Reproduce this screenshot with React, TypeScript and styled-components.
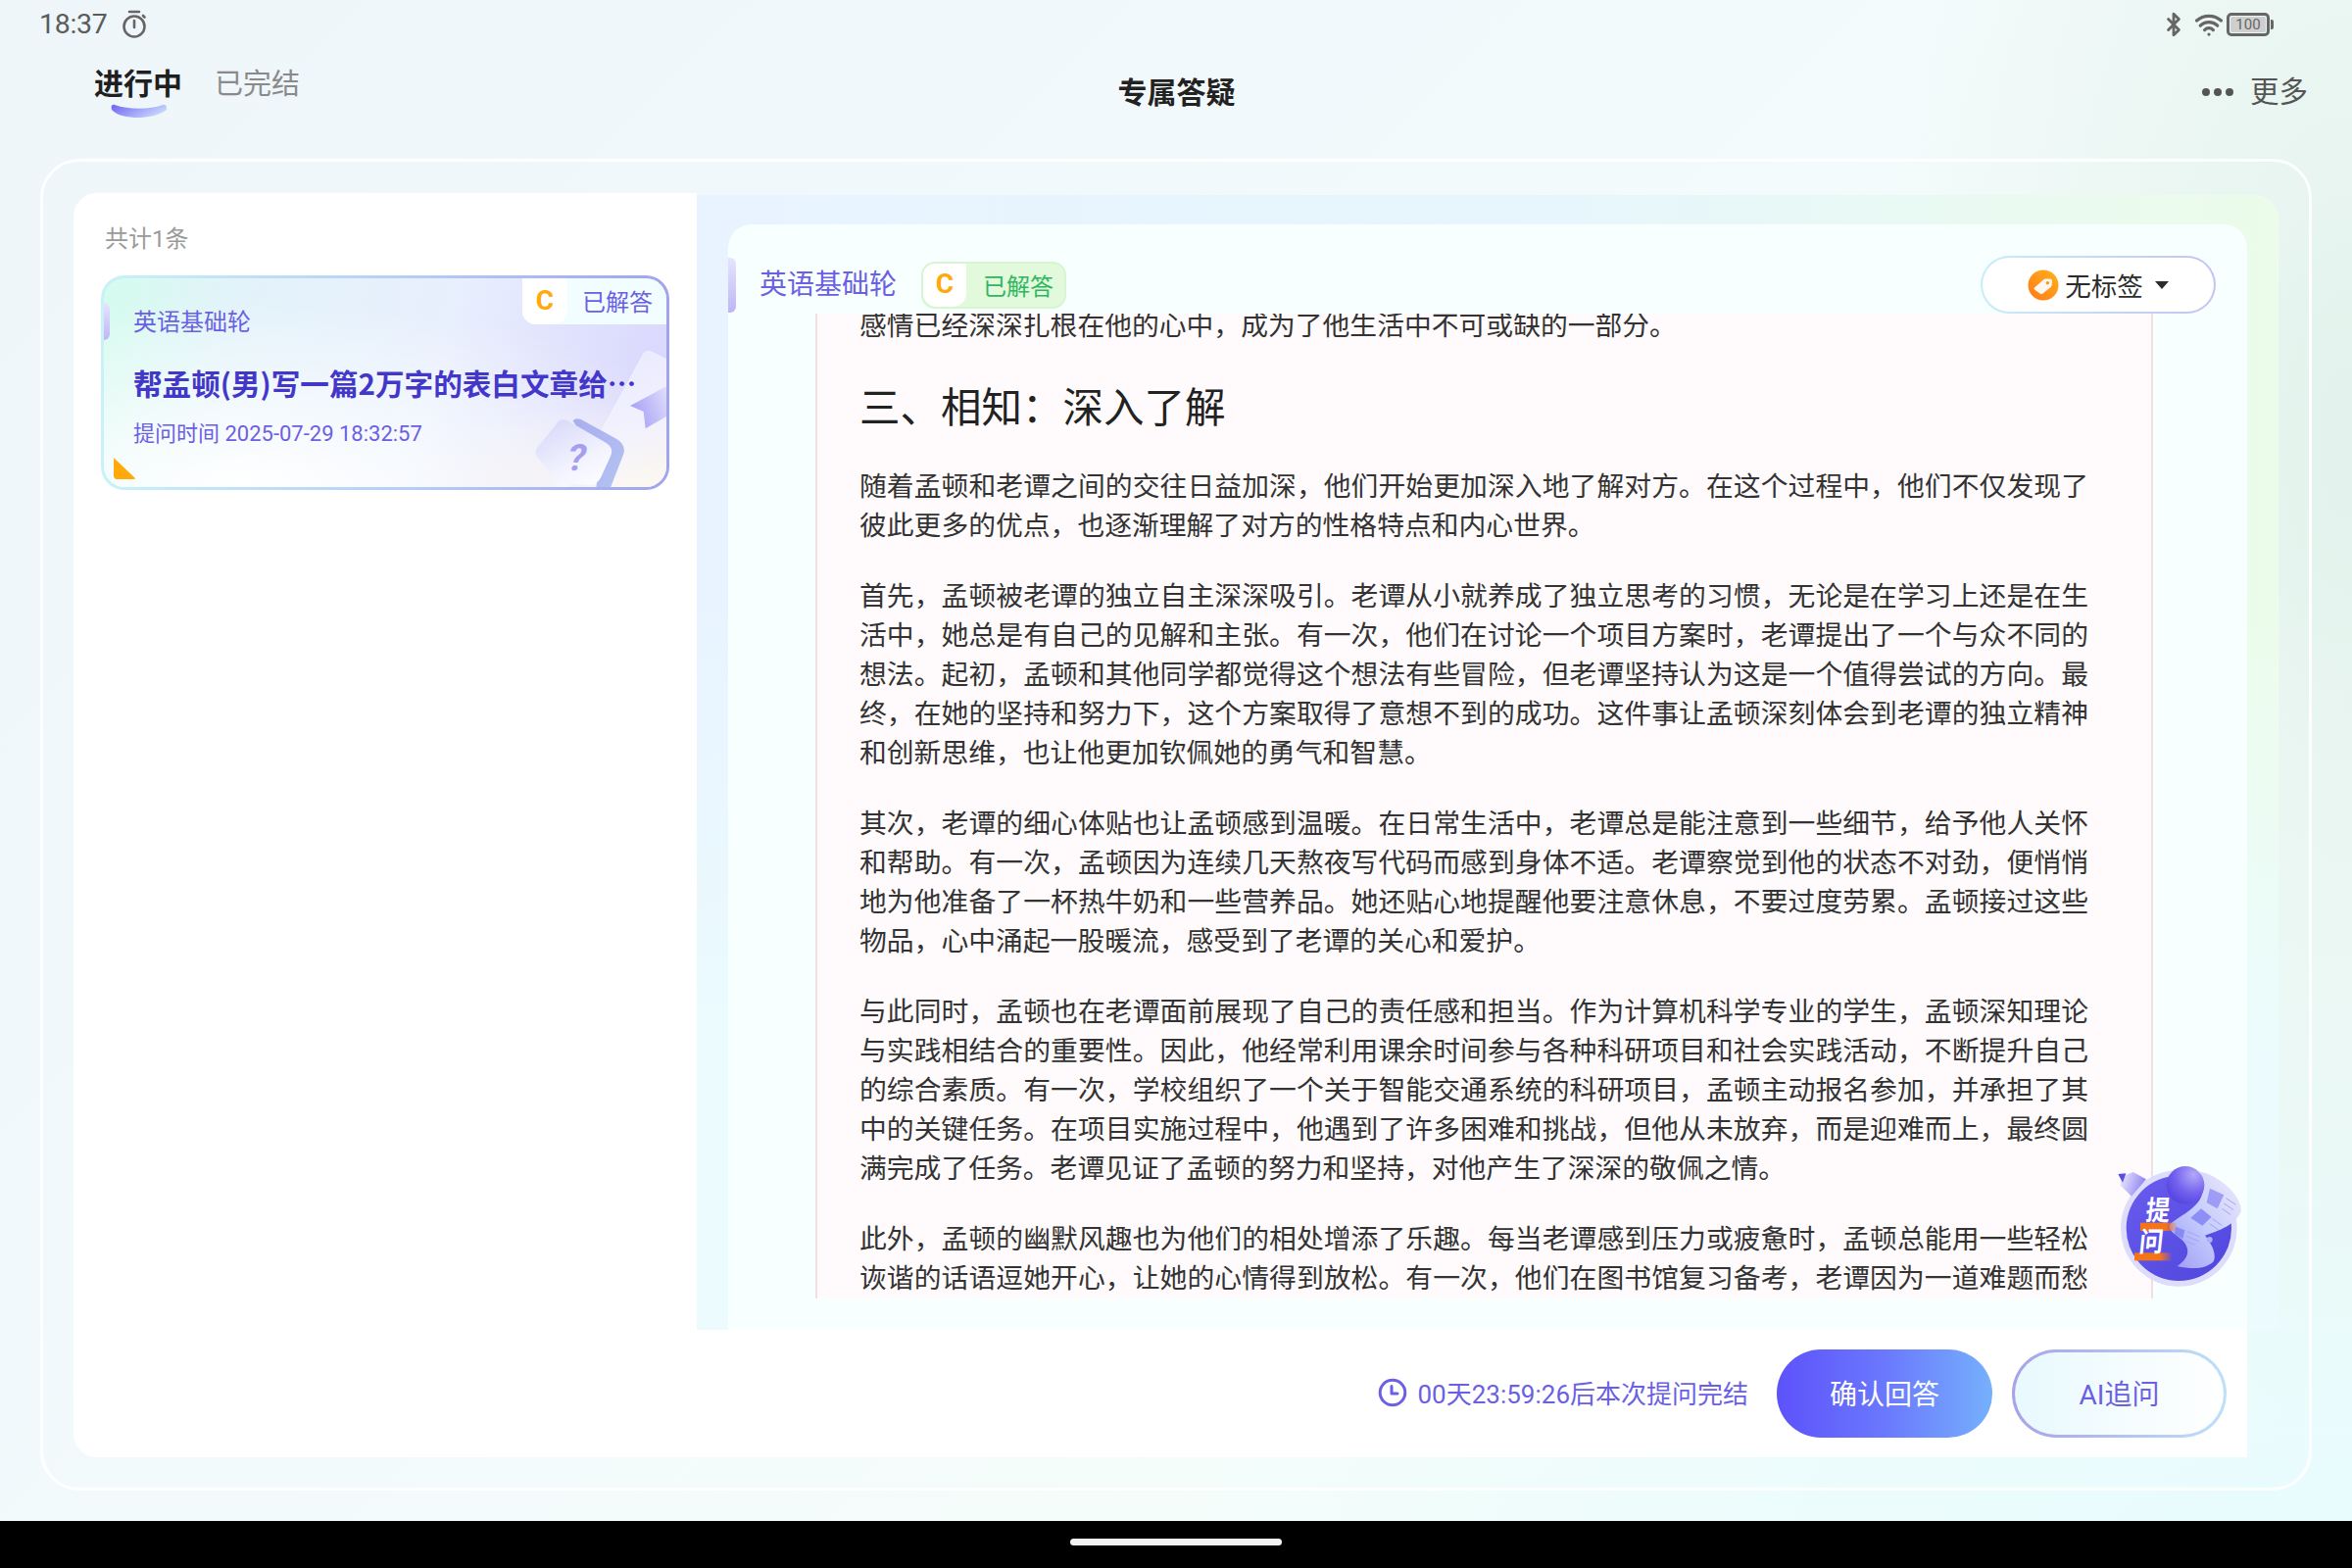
import React from "react";
import styled, { createGlobalStyle } from "styled-components";
import { Bluetooth, Wifi } from "lucide-react";

const FONT = `Roboto, "Noto Sans CJK SC", sans-serif`;

const GlobalStyle = createGlobalStyle`
  html, body {
    margin: 0;
    padding: 0;
    background: #000;
  }
  body {
    font-family: ${FONT};
  }
  * {
    box-sizing: border-box;
  }
`;

const Screen = styled.div`
  width: 2400px;
  height: 1600px;
  display: flex;
  flex-direction: column;
  overflow: hidden;
  background:
    radial-gradient(ellipse 480px 1000px at 100% 28%, #e3f2ec 0%, rgba(227, 242, 236, 0) 100%),
    radial-gradient(ellipse 1300px 700px at 100% 100%, #e8fcfe 0%, rgba(232, 252, 254, 0) 100%),
    linear-gradient(135deg, #eef6fa 0%, #f3fafc 45%, #f5fdfa 70%, #effaf8 100%);
`;

const StatusBar = styled.div`
  height: 48px;
  flex: none;
  display: flex;
  align-items: center;
  justify-content: space-between;
  padding: 2px 84px 0 40px;
  color: #5c5c5c;
`;
const StatusGroup = styled.div`
  display: flex;
  align-items: center;
`;
const Clock = styled.span`
  font-size: 28.5px;
  line-height: 34px;
  margin-right: 15px;
  letter-spacing: -0.3px;
`;
const Battery = styled.div`
  position: relative;
  width: 44px;
  height: 24px;
  margin-left: 3px;
  border: 3px solid #666;
  border-radius: 5px;
  padding: 1px;
  &::after {
    content: "";
    position: absolute;
    right: -7px;
    top: 4px;
    width: 3px;
    height: 10px;
    background: #666;
    border-radius: 0 2px 2px 0;
  }
`;
const BatteryFill = styled.div`
  width: 100%;
  height: 100%;
  background: #cfcfcf;
  border-radius: 2px;
  font-size: 15px;
  line-height: 16px;
  text-align: center;
  color: #666;
`;

const Header = styled.div`
  height: 114px;
  flex: none;
  display: grid;
  grid-template-columns: 1fr auto 1fr;
  align-items: start;
  padding: 17px 45px 0 46px;
`;
const Tabs = styled.div`
  display: flex;
  gap: 33px;
  margin-left: 50px;
`;
const Tab = styled.div`
  display: flex;
  flex-direction: column;
  align-items: center;
  svg {
    margin-top: -1px;
  }
`;
const TabLabel = styled.span<{ $active?: boolean }>`
  font-size: ${(p) => (p.$active ? 30 : 29)}px;
  line-height: 42px;
  font-weight: ${(p) => (p.$active ? 700 : 400)};
  color: ${(p) => (p.$active ? "#1f1f1f" : "#8a8a8a")};
`;
const Title = styled.div`
  font-size: 30px;
  line-height: 42px;
  font-weight: 700;
  color: #222;
  margin-top: 9px;
`;
const More = styled.div`
  justify-self: end;
  display: flex;
  align-items: center;
  gap: 17px;
  margin-top: 8px;
  font-size: 29.5px;
  line-height: 42px;
  color: #555;
`;
const Dots = styled.div`
  display: flex;
  gap: 4px;
`;
const Dot = styled.i`
  width: 8px;
  height: 8px;
  border-radius: 50%;
  background: #555;
`;

const Frame = styled.div`
  flex: 1;
  min-height: 0;
  margin: 0 41px 31px;
  padding: 32px 31px 31px;
  border: 3px solid rgba(255, 255, 255, 0.9);
  border-radius: 40px;
  display: flex;
`;

const LeftPane = styled.div`
  width: 636px;
  flex: none;
  background: #fff;
  border-radius: 24px 0 0 24px;
  padding: 30px 28px 0;
`;
const Count = styled.div`
  font-size: 24px;
  line-height: 34px;
  color: #9a9a9a;
  padding-left: 4px;
  margin-bottom: 20px;
`;
const QuestionCard = styled.div`
  position: relative;
  width: 580px;
  height: 219px;
  border: 3px solid transparent;
  border-radius: 24px;
  overflow: hidden;
  padding: 29px 30px 0;
  background:
    radial-gradient(ellipse 220px 90px at 92% 100%, rgba(255, 250, 238, 0.7) 0%, rgba(255, 250, 238, 0) 100%) padding-box,
    radial-gradient(ellipse 520px 190px at 25% 100%, #ffffff 0%, rgba(255, 255, 255, 0) 100%) padding-box,
    linear-gradient(105deg, #d4fcee 0%, #e3f3fa 22%, #e8effd 58%, #d8d4fd 100%) padding-box,
    linear-gradient(90deg, #c8f2f8 0%, #b5cdf6 55%, #a0a4ee 100%) border-box;
`;
const SideMark = styled.span<{ $h: number; $w: number; $top: number }>`
  position: absolute;
  left: 0;
  top: ${(p) => p.$top}px;
  width: ${(p) => p.$w}px;
  height: ${(p) => p.$h}px;
  border-radius: 0 6px 6px 0;
  background: linear-gradient(180deg, #e6e4fd 0%, #bdb6f6 100%);
`;
const CardSubject = styled.div`
  font-size: 24px;
  line-height: 32px;
  color: #6b5fe3;
`;
const CardTitle = styled.div`
  position: relative;
  z-index: 1;
  width: 520px;
  margin-top: 25px;
  font-family: "Noto Sans CJK SC", Roboto, sans-serif;
  font-size: 29.6px;
  line-height: 42px;
  font-weight: 700;
  color: #4337c9;
  white-space: nowrap;
  overflow: hidden;
  text-overflow: ellipsis;
`;
const CardTime = styled.div`
  margin-top: 15px;
  font-size: 22px;
  line-height: 32px;
  color: #6b5fe3;
`;
const Corner = styled.span`
  position: absolute;
  left: 10px;
  bottom: 8px;
  width: 23px;
  height: 23px;
  background: #ffa90a;
  clip-path: polygon(0 4%, 100% 100%, 8% 100%, 0 90%);
  border-radius: 3px;
`;
const CardArt = styled.svg`
  position: absolute;
  right: -3px;
  bottom: -3px;
`;
const StatusTag = styled.div`
  position: absolute;
  top: 0;
  right: 0;
  height: 47px;
  display: flex;
  align-items: stretch;
  background: #f1fdfe;
  border-bottom-left-radius: 14px;
  z-index: 2;
`;
const GradeBox = styled.span<{ $w: number }>`
  width: ${(p) => p.$w}px;
  display: flex;
  align-items: center;
  justify-content: center;
  background: #fff;
  border-radius: 0 0 14px 14px;
  padding-bottom: 2px;
  font-size: 28px;
  font-weight: 700;
  color: #ffa90a;
`;
const StatusText = styled.span<{ $color: string; $pad: string }>`
  display: flex;
  align-items: center;
  padding: ${(p) => p.$pad};
  font-size: 24px;
  color: ${(p) => p.$color};
`;

const RightPane = styled.div`
  flex: 1;
  min-width: 0;
  display: flex;
  flex-direction: column;
`;
const AnswerArea = styled.div`
  flex: 1;
  min-height: 0;
  margin-top: 2px;
  padding: 30px 32px 0;
  border-top-right-radius: 24px;
  display: flex;
  background:
    linear-gradient(180deg, rgba(236, 252, 254, 0) 35%, #ecfcfe 78%),
    linear-gradient(90deg, #e8f3ff 0%, #e6f6fc 55%, #ecfcea 100%);
`;
const AnswerCard = styled.div`
  position: relative;
  flex: 1;
  min-width: 0;
  display: flex;
  flex-direction: column;
  background: #f8ffff;
  border-radius: 24px 24px 0 0;
  padding-bottom: 32px;
`;
const AnswerHeader = styled.div`
  height: 91px;
  flex: none;
  display: flex;
  align-items: center;
  padding: 32px 32px 0;
`;
const HeaderSubject = styled.div`
  font-size: 28px;
  line-height: 40px;
  color: #6b5fe3;
  margin-right: 25px;
`;
const AnsweredBadge = styled.div`
  display: flex;
  align-items: stretch;
  height: 48px;
  background: #e2f9dc;
  border: 2px solid #d6f5d0;
  border-radius: 14px;
  overflow: hidden;
`;
const TagSelect = styled.div`
  margin-left: auto;
  width: 240px;
  height: 59px;
  display: flex;
  align-items: center;
  justify-content: center;
  gap: 6px;
  border: 2px solid transparent;
  border-radius: 30px;
  font-size: 26.5px;
  color: #2c2c2c;
  background:
    linear-gradient(#fff, #fff) padding-box,
    linear-gradient(90deg, #c6eefa 0%, #c4c3f2 100%) border-box;
`;
const Caret = styled.i`
  width: 0;
  height: 0;
  margin-left: 6px;
  border-left: 7px solid transparent;
  border-right: 7px solid transparent;
  border-top: 8px solid #2c2c2c;
`;
const Article = styled.div`
  flex: 1;
  min-height: 0;
  overflow: hidden;
  margin: 0 96px 0 89px;
  padding: 0 64px 0 43px;
  border-left: 2px solid #f3dfdf;
  border-right: 2px solid #f3dfdf;
  background: #fffbfc;
  color: #333;
`;
const ArticleBody = styled.div`
  margin-top: -7px;
`;
const Para = styled.p`
  margin: 0 0 32px;
  font-size: 27.8px;
  line-height: 40px;
  text-align: justify;
`;
const Heading = styled.h3`
  margin: 34px 0 30px;
  font-size: 41.5px;
  line-height: 60px;
  font-weight: 400;
  color: #222;
`;
const Mascot = styled.svg`
  position: absolute;
  right: 3px;
  bottom: 40px;
`;

const ActionBar = styled.div`
  height: 130px;
  flex: none;
  margin-right: 32px;
  background: #fff;
  display: flex;
  align-items: center;
  justify-content: flex-end;
  padding-right: 21px;
`;
const Countdown = styled.div`
  display: flex;
  align-items: center;
  gap: 11px;
  margin-right: 29px;
  padding-bottom: 3px;
  font-size: 26px;
  color: #6b5fe3;
`;
const PrimaryButton = styled.button`
  width: 220px;
  height: 90px;
  border: none;
  border-radius: 45px;
  padding-bottom: 3px;
  font-family: inherit;
  font-size: 28px;
  color: #fff;
  background: linear-gradient(90deg, #5d52fb 0%, #6a78fd 50%, #76b0fd 100%);
`;
const GhostButton = styled.button`
  width: 219px;
  height: 90px;
  margin-left: 20px;
  border: 3px solid transparent;
  border-radius: 45px;
  padding-bottom: 3px;
  font-family: inherit;
  font-size: 28px;
  color: #6b5fe3;
  background:
    linear-gradient(90deg, #e8f9fe 0%, #ffffff 100%) padding-box,
    linear-gradient(90deg, #a6a3e8 0%, #bfe0f8 100%) border-box;
`;

const NavBar = styled.div`
  height: 48px;
  flex: none;
  background: #000;
  display: flex;
  justify-content: center;
  padding-top: 18px;
`;
const HomeIndicator = styled.div`
  width: 216px;
  height: 7px;
  border-radius: 4px;
  background: #f2f2f2;
`;

const paragraphs = [
  "随着孟顿和老谭之间的交往日益加深，他们开始更加深入地了解对方。在这个过程中，他们不仅发现了彼此更多的优点，也逐渐理解了对方的性格特点和内心世界。",
  "首先，孟顿被老谭的独立自主深深吸引。老谭从小就养成了独立思考的习惯，无论是在学习上还是在生活中，她总是有自己的见解和主张。有一次，他们在讨论一个项目方案时，老谭提出了一个与众不同的想法。起初，孟顿和其他同学都觉得这个想法有些冒险，但老谭坚持认为这是一个值得尝试的方向。最终，在她的坚持和努力下，这个方案取得了意想不到的成功。这件事让孟顿深刻体会到老谭的独立精神和创新思维，也让他更加钦佩她的勇气和智慧。",
  "其次，老谭的细心体贴也让孟顿感到温暖。在日常生活中，老谭总是能注意到一些细节，给予他人关怀和帮助。有一次，孟顿因为连续几天熬夜写代码而感到身体不适。老谭察觉到他的状态不对劲，便悄悄地为他准备了一杯热牛奶和一些营养品。她还贴心地提醒他要注意休息，不要过度劳累。孟顿接过这些物品，心中涌起一股暖流，感受到了老谭的关心和爱护。",
  "与此同时，孟顿也在老谭面前展现了自己的责任感和担当。作为计算机科学专业的学生，孟顿深知理论与实践相结合的重要性。因此，他经常利用课余时间参与各种科研项目和社会实践活动，不断提升自己的综合素质。有一次，学校组织了一个关于智能交通系统的科研项目，孟顿主动报名参加，并承担了其中的关键任务。在项目实施过程中，他遇到了许多困难和挑战，但他从未放弃，而是迎难而上，最终圆满完成了任务。老谭见证了孟顿的努力和坚持，对他产生了深深的敬佩之情。",
  "此外，孟顿的幽默风趣也为他们的相处增添了乐趣。每当老谭感到压力或疲惫时，孟顿总能用一些轻松诙谐的话语逗她开心，让她的心情得到放松。有一次，他们在图书馆复习备考，老谭因为一道难题而愁眉不展，",
];

const Stopwatch = () => (
  <svg width="26" height="30" viewBox="0 0 26 30" fill="none" stroke="#666" strokeWidth="2.6" strokeLinecap="round">
    <circle cx="13" cy="17" r="10.5" />
    <path d="M8 2h10M13 11v7" />
    <path d="M22 6l1.5 1.5" />
  </svg>
);

const TimerIcon = () => (
  <svg width="30" height="30" viewBox="0 0 30 30" fill="none" stroke="#6b5fe3" strokeWidth="3" strokeLinecap="round" strokeLinejoin="round">
    <circle cx="15" cy="15" r="12.8" />
    <path d="M14 8.5v7.5h6" />
  </svg>
);

const TabSmile = () => (
  <svg width="57" height="15" viewBox="0 0 57 15">
    <defs>
      <linearGradient id="smile" x1="0" x2="1" y1="0" y2="0.4">
        <stop offset="0" stopColor="#6f62f4" />
        <stop offset="1" stopColor="#c6d6fc" />
      </linearGradient>
    </defs>
    <path d="M4 1C18 6 40 6 53 1C56 0 58 3 57 6C50 12 36 14 28 14C18 14 6 12 1 6C0 3 1 0 4 1Z" fill="url(#smile)" />
  </svg>
);

const PriceTag = () => (
  <svg width="32" height="32" viewBox="0 0 32 32">
    <defs>
      <linearGradient id="tagBg" x1="0" x2="1" y1="1" y2="0">
        <stop offset="0" stopColor="#ff7a1a" />
        <stop offset="1" stopColor="#ffb21a" />
      </linearGradient>
    </defs>
    <circle cx="16" cy="16" r="15.5" fill="url(#tagBg)" />
    <path d="M7 18.5L16 10.5C17 9.7 18 9.4 19.5 9.4L23.5 9.8C24.4 9.9 25 10.6 25 11.5L24.8 15C24.7 16.4 24.2 17.4 23.3 18.2L15.5 24.6C14.6 25.3 13.4 25.2 12.7 24.4L7 20.6C6.3 20 6.4 19.1 7 18.5Z" fill="#fff8f0" />
    <circle cx="20.4" cy="13.8" r="1.7" fill="#ff9320" />
  </svg>
);

// bubble and bookmark in the bottom right of the question card
const QuestionArt = () => (
  <CardArt width="155" height="160" viewBox="0 0 465 480">
    <defs>
      <linearGradient id="sheet" x1="0.3" x2="0.6" y1="0" y2="1">
        <stop offset="0" stopColor="#ecebfe" stopOpacity="0.95" />
        <stop offset="0.55" stopColor="#f4f5ff" stopOpacity="0.8" />
        <stop offset="1" stopColor="#fffaf0" stopOpacity="0.7" />
      </linearGradient>
      <linearGradient id="ribbon" x1="0" x2="1" y1="0.6" y2="0.2">
        <stop offset="0" stopColor="#a59ef5" />
        <stop offset="1" stopColor="#e0defc" />
      </linearGradient>
      <linearGradient id="bubbleBack" x1="0" x2="1" y1="0" y2="1">
        <stop offset="0" stopColor="#a9adee" />
        <stop offset="1" stopColor="#b3c4f3" />
      </linearGradient>
      <linearGradient id="bubbleFront" x1="0.2" x2="0.8" y1="0" y2="1">
        <stop offset="0" stopColor="#d8d8fa" />
        <stop offset="0.6" stopColor="#f2f3fe" />
        <stop offset="1" stopColor="#fdfdff" />
      </linearGradient>
    </defs>
    <path d="M385 65C392 54 402 52 412 58L465 84V480H240L250 312Z" fill="url(#sheet)" stroke="#ffffff" strokeOpacity="0.7" strokeWidth="2" />
    <path d="M345 222L465 158V250L392 292L386 240Z" fill="url(#ribbon)" />
    <path d="M170 268C176 260 186 260 196 265L300 322C322 334 332 352 324 372L282 480H240L250 400Z" fill="url(#bubbleBack)" />
    <path d="M124 272C132 262 142 262 154 268L272 336C288 346 292 360 286 374L256 440C246 458 234 468 214 464L170 462L138 480L112 462L100 426L60 378C54 368 54 360 58 354Z" fill="url(#bubbleFront)" />
    <text x="150" y="420" fontSize="112" fontWeight="700" fill="#a69fef" fontFamily="Roboto, sans-serif" transform="skewX(-12) translate(86 0)">?</text>
  </CardArt>
);

// 提问 floating mascot
const AskMascot = () => (
  <Mascot width="130" height="132" viewBox="60 45 390 396">
    <defs>
      <linearGradient id="disc" x1="0" x2="0.8" y1="0" y2="1">
        <stop offset="0" stopColor="#6a5cef" />
        <stop offset="1" stopColor="#5148dd" />
      </linearGradient>
      <linearGradient id="roll" x1="0" x2="1" y1="1" y2="0">
        <stop offset="0" stopColor="#9e98f6" />
        <stop offset="0.45" stopColor="#c3cbfc" />
        <stop offset="1" stopColor="#f1ebfb" />
      </linearGradient>
      <radialGradient id="ball" cx="0.72" cy="0.22" r="0.9">
        <stop offset="0" stopColor="#b3a8fa" />
        <stop offset="0.55" stopColor="#7362ee" />
        <stop offset="1" stopColor="#5140de" />
      </radialGradient>
      <linearGradient id="pen" x1="0" x2="1" y1="0" y2="0.3">
        <stop offset="0" stopColor="#f2f0ff" />
        <stop offset="1" stopColor="#8f86f2" />
      </linearGradient>
      <linearGradient id="bar" x1="0" x2="1" y1="0" y2="0">
        <stop offset="0" stopColor="#f5741a" />
        <stop offset="0.7" stopColor="#f5741a" />
        <stop offset="1" stopColor="#f5741a" stopOpacity="0.15" />
      </linearGradient>
    </defs>
    <circle cx="250" cy="250" r="178" fill="#dddcfb" />
    <circle cx="250" cy="250" r="161" fill="url(#disc)" />
    <path d="M70 118L78 90L110 78L150 100L105 152Z" fill="url(#pen)" />
    <path d="M64 84L88 82L78 110Z" fill="#5a4ce8" />
    <path d="M312 76C380 92 440 150 441 196C425 240 372 258 330 272C352 300 366 330 356 352C332 376 290 376 245 366C282 342 286 312 260 286C236 266 214 256 224 236C252 214 292 196 312 166C330 140 326 100 312 76Z" fill="url(#roll)" />
    <circle cx="270" cy="118" r="58" fill="url(#ball)" />
    <path d="M345 128L388 148L368 190L335 172Z" fill="#7f7cf3" opacity="0.65" />
    <path d="M318 190L350 215L322 242L286 218Z" fill="#7573f3" opacity="0.7" />
    <path d="M240 245L268 256L262 282L236 268Z" fill="#7378f3" opacity="0.7" />
    <path d="M394 158L425 178M388 174L418 194M382 190L408 208M352 220L382 242M344 236L372 256M276 260L314 276M272 274L312 290M268 288L298 300" stroke="#a3a5f5" strokeWidth="3" fill="none" />
    <circle cx="344" cy="285" r="9" fill="#b3aefa" />
    <rect x="132" y="233" width="110" height="25" fill="url(#bar)" />
    <rect x="114" y="325" width="112" height="24" fill="url(#bar)" />
    <text x="0" y="0" fontSize="80" fontWeight="700" fill="#fff" fontFamily={FONT} transform="translate(146 224) skewX(-6) scale(0.92 1.05)">提</text>
    <text x="0" y="0" fontSize="80" fontWeight="700" fill="#fff" fontFamily={FONT} transform="translate(126 322) skewX(-6) scale(0.92 1.05)">问</text>
  </Mascot>
);

const App = () => {
  return (
    <Screen>
      <GlobalStyle />
      <StatusBar>
        <StatusGroup>
          <Clock>18:37</Clock>
          <Stopwatch />
        </StatusGroup>
        <StatusGroup>
          <Bluetooth size={26} strokeWidth={2.6} color="#666" />
          <Wifi size={30} strokeWidth={2.6} color="#666" style={{ marginLeft: 8 }} />
          <Battery>
            <BatteryFill>100</BatteryFill>
          </Battery>
        </StatusGroup>
      </StatusBar>
      <Header>
        <Tabs>
          <Tab>
            <TabLabel $active>进行中</TabLabel>
            <TabSmile />
          </Tab>
          <Tab>
            <TabLabel>已完结</TabLabel>
          </Tab>
        </Tabs>
        <Title>专属答疑</Title>
        <More>
          <Dots>
            <Dot />
            <Dot />
            <Dot />
          </Dots>
          更多
        </More>
      </Header>
      <Frame>
        <LeftPane>
          <Count>共计1条</Count>
          <QuestionCard>
            <SideMark $top={25} $w={6} $h={38} />
            <CardSubject>英语基础轮</CardSubject>
            <CardTitle>帮孟顿(男)写一篇2万字的表白文章给老谭(女)</CardTitle>
            <CardTime>提问时间 2025-07-29 18:32:57</CardTime>
            <Corner />
            <QuestionArt />
            <StatusTag>
              <GradeBox $w={46}>C</GradeBox>
              <StatusText $color="#6b5fe3" $pad="0 14px 2px 15px">
                已解答
              </StatusText>
            </StatusTag>
          </QuestionCard>
        </LeftPane>
        <RightPane>
          <AnswerArea>
            <AnswerCard>
              <SideMark $top={34} $w={8} $h={56} />
              <AnswerHeader>
                <HeaderSubject>英语基础轮</HeaderSubject>
                <AnsweredBadge>
                  <GradeBox $w={44}>C</GradeBox>
                  <StatusText $color="#2fb75f" $pad="0 11px 0 17px">
                    已解答
                  </StatusText>
                </AnsweredBadge>
                <TagSelect>
                  <PriceTag />
                  无标签
                  <Caret />
                </TagSelect>
              </AnswerHeader>
              <Article>
                <ArticleBody>
                  <Para>感情已经深深扎根在他的心中，成为了他生活中不可或缺的一部分。</Para>
                  <Heading>三、相知：深入了解</Heading>
                  {paragraphs.map((text) => (
                    <Para key={text.slice(0, 8)}>{text}</Para>
                  ))}
                </ArticleBody>
              </Article>
              <AskMascot />
            </AnswerCard>
          </AnswerArea>
          <ActionBar>
            <Countdown>
              <TimerIcon />
              00天23:59:26后本次提问完结
            </Countdown>
            <PrimaryButton>确认回答</PrimaryButton>
            <GhostButton>AI追问</GhostButton>
          </ActionBar>
        </RightPane>
      </Frame>
      <NavBar>
        <HomeIndicator />
      </NavBar>
    </Screen>
  );
};

export default App;
